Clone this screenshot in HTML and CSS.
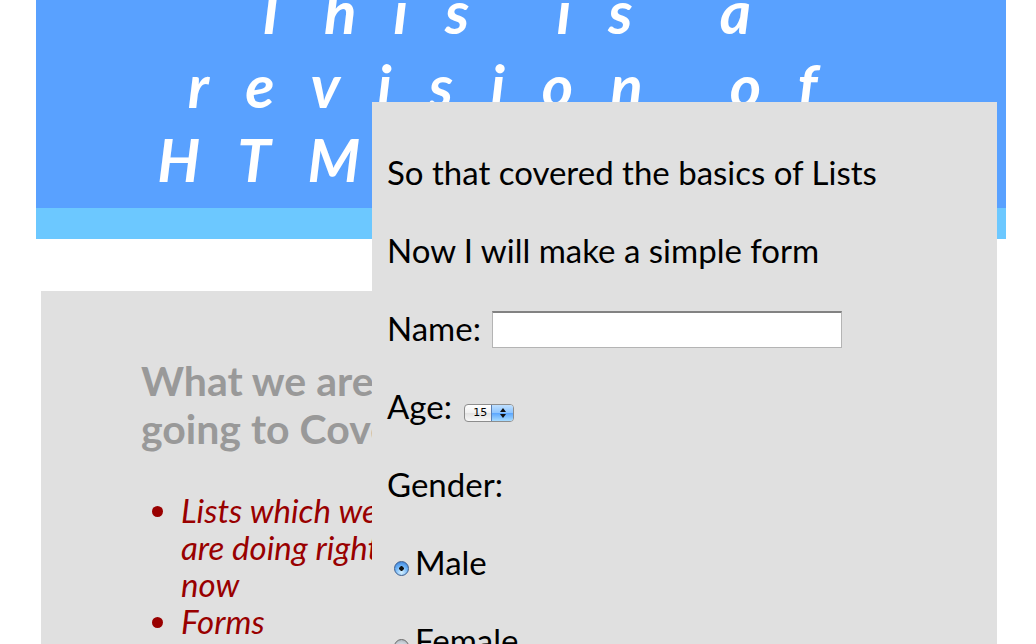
FILE: index.html
```html
<!DOCTYPE html>
<html lang="en">

<head>
    <meta charset="UTF-8">
    <meta name="viewport" content="width=device-width, initial-scale=1.0">
    <title>HTML Revision</title>
    <link rel="stylesheet" href="styles.css">
</head>

<body>

    <div class="banner">
        <h1>This is a revision of HTML topics</h1>
    </div>

    <div class="outline">
        <h2>What we are going to Cover</h2>
        <ul>
            <li>Lists which we are doing right now</li>
            <li>Forms</li>
            <li>Tables</li>
        </ul>
    </div>

    <div class="panel">
        <p>So that covered the basics of Lists</p>
        <p>Now I will make a simple form</p>

        <form>
            <p>Name: <input type="text" class="name-input" name="name"></p>
            <p>Age: <span class="age-select"><select name="age">
                        <option>15</option>
                        <option>16</option>
                        <option>17</option>
                    </select><span class="age-arrows"><svg width="8" height="12" viewBox="0 0 8 12">
                            <path d="M4 1 L7 5 L1 5 Z" fill="#111"/>
                            <path d="M4 11 L7 7 L1 7 Z" fill="#111"/>
                        </svg></span></span></p>
            <p>Gender:</p>
            <p><input type="radio" name="gender" class="radio" checked>Male</p>
            <p><input type="radio" name="gender" class="radio">Female</p>
        </form>
    </div>

</body>

</html>
```

FILE: styles.css
```css
body {
    font-family: Lato, "Open Sans", sans-serif;
    margin: 0;
    padding: 0;
    background-color: #fff;
    position: relative;
    min-height: 100vh;
    overflow: hidden;
}

/* header */
.banner {
    margin: 0 30px 0 36px;
    background-color: #59a1ff;
    border-bottom: 31px solid #6cc8ff;
    height: 208px;
    overflow: hidden;
}

.banner h1 {
    margin: -26px 0 0 0;
    padding: 0 20px;
    color: #fff;
    font-size: 60px;
    font-style: italic;
    font-weight: bold;
    letter-spacing: 37px;
    line-height: 74px;
    text-align: center;
}

/* left box */
.outline {
    margin: 52px 0 0 41px;
    width: 400px;
    height: 600px;
    padding: 66px 0 0 100px;
    background-color: #e0e0e0;
}

.outline h2 {
    margin: 0 0 39px 0;
    color: #999;
    font-size: 41px;
    line-height: 48px;
    width: 300px;
}

.outline ul {
    margin: 0;
    padding-left: 40px;
    width: 240px;
    color: #990000;
    font-style: italic;
    font-size: 33px;
    line-height: 37px;
}

/* form panel */
.panel {
    position: absolute;
    top: 102px;
    left: 372px;
    width: 595px;
    height: 700px;
    padding: 52px 15px 0 15px;
    background-color: #e0e0e0;
    color: #000;
    font-size: 33px;
}

.panel p {
    margin: 0 0 42px 0;
    height: 36px;
    line-height: 36px;
}

.panel form {
    margin: 0;
}

.name-input {
    box-sizing: border-box;
    width: 350px;
    height: 37px;
    margin: 1px 0 0 3px;
    padding: 0;
    border: 1px solid #b4b4b4;
    border-top: 2px solid #828282;
    background-color: #fff;
    vertical-align: top;
}

.age-select {
    position: relative;
    display: inline-flex;
    margin-left: 4px;
    vertical-align: 3px;
    line-height: 16px;
}

.age-select select {
    appearance: none;
    -webkit-appearance: none;
    box-sizing: border-box;
    width: 50px;
    height: 18px;
    margin: 0;
    padding: 0 0 0 8px;
    border: 1px solid #8d8d8d;
    border-radius: 4px;
    background: linear-gradient(#ffffff, #f0f0f0 50%, #e2e2e2 51%, #f8f8f8);
    font-family: "DejaVu Sans", sans-serif;
    font-size: 11px;
    line-height: 16px;
    color: #000;
}

.age-arrows {
    position: absolute;
    top: 1px;
    right: 1px;
    width: 21px;
    height: 16px;
    border-left: 1px solid #5a7fb5;
    border-radius: 0 3px 3px 0;
    background: linear-gradient(#bfe0ff, #8cc4ff 50%, #5aa6ff 51%, #a8dcff);
    display: flex;
    align-items: center;
    justify-content: center;
    pointer-events: none;
}

.radio {
    appearance: none;
    -webkit-appearance: none;
    width: 15px;
    height: 15px;
    margin: 0 6px 0 7px;
    border: 1px solid #6a6a6a;
    border-radius: 50%;
    background: radial-gradient(circle at 50% 70%, #e6f4ff, #c8d0d8 60%, #9aa0a8);
    vertical-align: -1px;
}

.radio:checked {
    border-color: #3d5f8f;
    background:
        radial-gradient(circle, #111 0, #111 2px, transparent 2.5px),
        radial-gradient(circle at 50% 80%, #d8f2ff, #6ab0f5 55%, #2f73d0);
}
```
